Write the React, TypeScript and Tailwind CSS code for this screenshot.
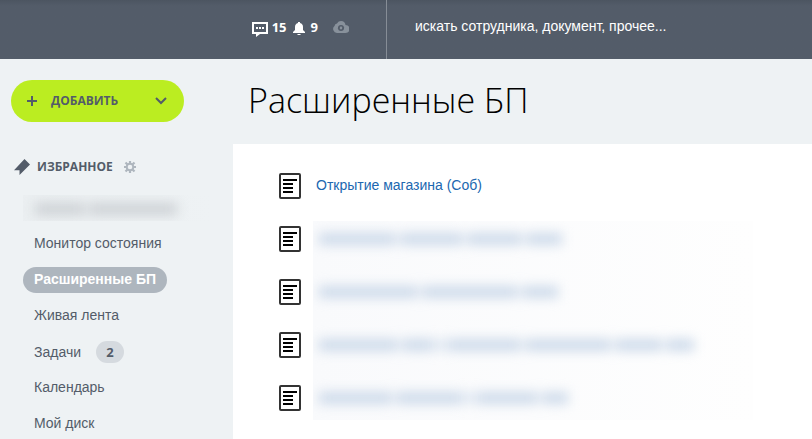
import React from 'react';

const sans = 'font-["Liberation_Sans",Arial,sans-serif]';
const open = 'font-["Open_Sans",sans-serif]';

function ChatIcon() {
  return (
    <svg width="16" height="15" viewBox="0 0 16 15" aria-hidden="true">
      <path fillRule="evenodd" fill="#fff" d="M0 0h16v12H8l-4 3v-3H0zM2 2v8h12V2z" />
      <path fill="#fff" d="M4 5h2v2H4zM7 5h2v2H7zM10 5h2v2h-2z" />
    </svg>
  );
}

function BellIcon() {
  return (
    <svg width="12" height="13" viewBox="0 0 12 13" aria-hidden="true">
      <path fill="#fff" d="M5 0h2v1c2 .4 3 2 3 4v3l2 2v1H0v-1l2-2V5c0-2 1-3.600 3-4zM4 12h4l-1 1H5z" />
    </svg>
  );
}

function CloudIcon() {
  return (
    <svg width="16" height="12" viewBox="0 0 16 12" aria-hidden="true">
      <path fill="#88919b" d="M4 12a4 4 0 0 1-2.500-7A3 3 0 0 1 4 2.500C5 .8 6.300 0 8 0c2.500 0 4.200 1.600 4.500 4A4 4 0 0 1 12.500 12z" />
      <circle cx="8" cy="7" r="2.200" fill="none" stroke="#535c69" strokeWidth="1.600" />
      <path fill="#535c69" d="M4.600 7.500 6.500 5v2.500zM11.400 6.500 9.500 9V6.500z" />
    </svg>
  );
}

function PinIcon() {
  return (
    <svg width="16" height="16" viewBox="0 0 16 16" aria-hidden="true">
      <path fill="#535c69" d="M10.500 0 16 5.500 5.500 16V11.300H0z" />
    </svg>
  );
}

function GearIcon() {
  return (
    <svg width="12" height="12" viewBox="0 0 12 12" fill="none" stroke="#aeb6be" aria-hidden="true">
      <circle cx="6" cy="6" r="3.300" strokeWidth="2" />
      <path
        strokeWidth="2.200"
        d="M6 0v2.500M6 9.500V12M0 6h2.500M9.500 6H12M1.500 1.500l2 2M8.500 8.500l2 2M1.500 10.500l2-2M8.500 3.500l2-2"
      />
    </svg>
  );
}

function DocumentIcon() {
  return (
    <svg className="shrink-0" width="22" height="26" viewBox="0 0 22 26" aria-hidden="true">
      <rect x="1" y="1" width="20" height="24" rx="1" fill="#fff" stroke="#333" strokeWidth="2" />
      <path fill="#000" d="M4 6h14v2H4zM4 10h10v2H4zM4 14h10v2H4zM4 18h10v2H4z" />
    </svg>
  );
}

const hiddenRows = [
  ['w-[77px]', 'w-[63px]', 'w-[55px]', 'w-[36px]'],
  ['w-[99px]', 'w-[96px]', 'w-[36px]'],
  ['w-[79px]', 'w-[32px]', 'w-[5px]', 'w-[74px]', 'w-[86px]', 'w-[47px]', 'w-[28px]'],
  ['w-[73px]', 'w-[67px]', 'w-[5px]', 'w-[62px]', 'w-[26px]'],
];

const links = ['Живая лента', 'Задачи', 'Календарь', 'Мой диск'];

export default function App() {
  return (
    <div className={`${sans} flex h-screen flex-col overflow-hidden bg-[#eef2f4] text-sm text-[#535c69]`}>
      <header className="flex h-[59px] shrink-0 bg-linear-to-b from-[#4c5561] to-[#535c69] to-10% text-white">
        <div className={`${open} flex w-[387px] shrink-0 items-start justify-end gap-[15px] border-r border-[#868d96] pt-[18px] pr-[37px] text-[13px] font-bold`}>
          <div className="flex gap-1.5">
            <button type="button" aria-label="Сообщения" className="flex h-[18px] items-center gap-1">
              <span className="pt-1"><ChatIcon /></span>
              <span>15</span>
            </button>
            <button type="button" aria-label="Уведомления" className="flex h-[18px] items-center gap-1.5">
              <span className="pt-0.5"><BellIcon /></span>
              <span>9</span>
            </button>
          </div>
          <button type="button" aria-label="Диск" className="flex h-[18px] items-center">
            <CloudIcon />
          </button>
        </div>
        <input
          type="search"
          aria-label="Поиск"
          placeholder="искать сотрудника, документ, прочее..."
          className="h-[51px] min-w-0 flex-1 bg-transparent pl-7 text-sm text-white outline-none placeholder:text-white"
        />
      </header>

      <div className="flex min-h-0 flex-1">
        <aside className="w-[233px] shrink-0 pt-[21px] pl-[11px]">
          <button type="button" className={`${open} flex h-[42px] w-[173px] items-center rounded-full bg-[#bbed21] pr-[17px] pl-4 text-xs font-bold`}>
            <svg width="10" height="10" viewBox="0 0 10 10" aria-hidden="true">
              <path fill="#535c69" d="M4 0h2v4h4v2H6v4H4V6H0V4h4z" />
            </svg>
            <span className="flex-1 pl-3.5 text-left">ДОБАВИТЬ</span>
            <svg width="12" height="8" viewBox="0 0 12 8" aria-hidden="true">
              <path fill="none" stroke="#535c69" strokeWidth="2" d="m1 1 5 5 5-5" />
            </svg>
          </button>

          <div className="mt-9 flex h-[18px] items-center pl-[3px]">
            <PinIcon />
            <h2 className={`${open} pl-[7px] text-xs font-bold`}>ИЗБРАННОЕ</h2>
            <button type="button" aria-label="Настроить" className="ml-[11px]"><GearIcon /></button>
          </div>

          <nav className="mt-[19px] flex flex-col items-start gap-2.5 pl-3">
            <div className="flex h-[26px] w-[188px] overflow-hidden bg-linear-to-r from-[#ebeff1] to-[#eef2f4]" aria-hidden="true">
              <div className="mt-2 ml-3 flex h-3 gap-1 blur-[6px]">
                <span className="w-[50px] bg-[#cdd1d5]" />
                <span className="w-[88px] bg-[#cdd1d5]" />
              </div>
            </div>
            <a href="#monitor" className="flex h-[26px] items-center px-[11px] pb-0.5">Монитор состояния</a>
            <a href="#bp" aria-current="page" className="flex h-[26px] items-center rounded-full bg-[#aeb6be] px-[11px] pb-0.5 font-bold text-white">
              Расширенные БП
            </a>
            {links.map((label) => (
              <a key={label} href="#section" className={`flex h-[26px] items-center px-[11px] ${label === 'Задачи' ? '' : 'pb-0.5'}`}>
                {label}
                {label === 'Задачи' && (
                  <span className={`${open} ml-[15px] flex h-[22px] w-7 items-center justify-center rounded-full bg-[#d5dadf] text-[13px] font-bold`}>2</span>
                )}
              </a>
            ))}
          </nav>
        </aside>

        <main className="flex min-w-0 flex-1 flex-col">
          <h1 className={`${open} flex h-[85px] shrink-0 items-center pb-0.5 pl-[15px] text-[34px] font-light text-black`}>
            Расширенные БП
          </h1>
          <section className="flex-1 bg-white pt-[29px] pl-[46px]">
            <div className="flex h-[26px] items-center gap-[15px]">
              <DocumentIcon />
              <a href="#open-shop" className="pb-0.5 text-[#2067b0]">Открытие магазина (Соб)</a>
            </div>
            <div className="mt-[22px] flex gap-3">
              <div className="flex flex-col gap-[27px] pt-[5px]">
                {hiddenRows.map((_, i) => <DocumentIcon key={i} />)}
              </div>
              <div className="flex h-[199px] w-[440px] flex-col gap-[41px] overflow-hidden bg-linear-to-r from-[#f9fafc] to-[#fefefe] pt-3 pl-1.5" aria-hidden="true">
                {hiddenRows.map((words, i) => (
                  <div key={i} className="flex h-3 shrink-0 gap-1 blur-[6px]">
                    {words.map((width, j) => <span key={j} className={`${width} bg-[#cddaea]`} />)}
                  </div>
                ))}
              </div>
            </div>
          </section>
        </main>
      </div>
    </div>
  );
}
